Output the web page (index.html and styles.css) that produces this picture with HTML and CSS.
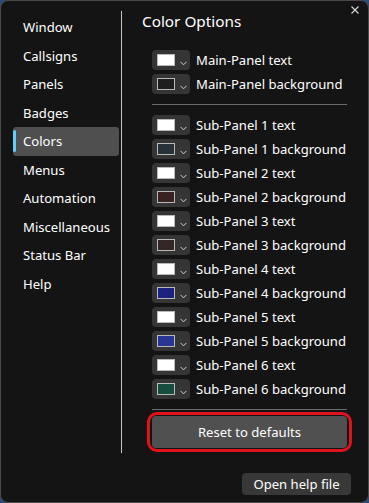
FILE: index.html
```html
<!DOCTYPE html>
<html>
<head>
<meta charset="utf-8">
<link rel="stylesheet" href="styles.css">
</head>
<body>
<div class="window">
  <svg class="close" width="8" height="8" viewBox="0 0 8 8"><path d="M0.5 0.5 L7.5 7.5 M7.5 0.5 L0.5 7.5" stroke="#d8d8d8" stroke-width="1.1" fill="none"/></svg>
  <nav class="sidebar">
    <div class="nav-item">Window</div>
    <div class="nav-item">Callsigns</div>
    <div class="nav-item">Panels</div>
    <div class="nav-item">Badges</div>
    <div class="nav-item active">Colors</div>
    <div class="nav-item">Menus</div>
    <div class="nav-item">Automation</div>
    <div class="nav-item">Miscellaneous</div>
    <div class="nav-item">Status Bar</div>
    <div class="nav-item">Help</div>
  </nav>
  <div class="vdivider"></div>
  <main class="content">
    <h1 class="title">Color Options</h1>
    <div class="rows first">
      <div class="row"><div class="picker"><span class="swatch" style="background:#ffffff"></span><svg class="chev" width="7" height="5" viewBox="0 0 7 5"><polyline points="0.5,0.8 3.5,3.8 6.5,0.8" fill="none" stroke="#cfcfcf" stroke-width="1"/></svg></div><span class="label">Main-Panel text</span></div>
      <div class="row"><div class="picker"><span class="swatch" style="background:#1e1e1e"></span><svg class="chev" width="7" height="5" viewBox="0 0 7 5"><polyline points="0.5,0.8 3.5,3.8 6.5,0.8" fill="none" stroke="#cfcfcf" stroke-width="1"/></svg></div><span class="label">Main-Panel background</span></div>
    </div>
    <div class="hdivider"></div>
    <div class="rows">
      <div class="row"><div class="picker"><span class="swatch" style="background:#ffffff"></span><svg class="chev" width="7" height="5" viewBox="0 0 7 5"><polyline points="0.5,0.8 3.5,3.8 6.5,0.8" fill="none" stroke="#cfcfcf" stroke-width="1"/></svg></div><span class="label">Sub-Panel 1 text</span></div>
      <div class="row"><div class="picker"><span class="swatch" style="background:#253238"></span><svg class="chev" width="7" height="5" viewBox="0 0 7 5"><polyline points="0.5,0.8 3.5,3.8 6.5,0.8" fill="none" stroke="#cfcfcf" stroke-width="1"/></svg></div><span class="label">Sub-Panel 1 background</span></div>
      <div class="row"><div class="picker"><span class="swatch" style="background:#ffffff"></span><svg class="chev" width="7" height="5" viewBox="0 0 7 5"><polyline points="0.5,0.8 3.5,3.8 6.5,0.8" fill="none" stroke="#cfcfcf" stroke-width="1"/></svg></div><span class="label">Sub-Panel 2 text</span></div>
      <div class="row"><div class="picker"><span class="swatch" style="background:#3b2222"></span><svg class="chev" width="7" height="5" viewBox="0 0 7 5"><polyline points="0.5,0.8 3.5,3.8 6.5,0.8" fill="none" stroke="#cfcfcf" stroke-width="1"/></svg></div><span class="label">Sub-Panel 2 background</span></div>
      <div class="row"><div class="picker"><span class="swatch" style="background:#ffffff"></span><svg class="chev" width="7" height="5" viewBox="0 0 7 5"><polyline points="0.5,0.8 3.5,3.8 6.5,0.8" fill="none" stroke="#cfcfcf" stroke-width="1"/></svg></div><span class="label">Sub-Panel 3 text</span></div>
      <div class="row"><div class="picker"><span class="swatch" style="background:#352626"></span><svg class="chev" width="7" height="5" viewBox="0 0 7 5"><polyline points="0.5,0.8 3.5,3.8 6.5,0.8" fill="none" stroke="#cfcfcf" stroke-width="1"/></svg></div><span class="label">Sub-Panel 3 background</span></div>
      <div class="row"><div class="picker"><span class="swatch" style="background:#ffffff"></span><svg class="chev" width="7" height="5" viewBox="0 0 7 5"><polyline points="0.5,0.8 3.5,3.8 6.5,0.8" fill="none" stroke="#cfcfcf" stroke-width="1"/></svg></div><span class="label">Sub-Panel 4 text</span></div>
      <div class="row"><div class="picker"><span class="swatch" style="background:#1a237e"></span><svg class="chev" width="7" height="5" viewBox="0 0 7 5"><polyline points="0.5,0.8 3.5,3.8 6.5,0.8" fill="none" stroke="#cfcfcf" stroke-width="1"/></svg></div><span class="label">Sub-Panel 4 background</span></div>
      <div class="row"><div class="picker"><span class="swatch" style="background:#ffffff"></span><svg class="chev" width="7" height="5" viewBox="0 0 7 5"><polyline points="0.5,0.8 3.5,3.8 6.5,0.8" fill="none" stroke="#cfcfcf" stroke-width="1"/></svg></div><span class="label">Sub-Panel 5 text</span></div>
      <div class="row"><div class="picker"><span class="swatch" style="background:#283593"></span><svg class="chev" width="7" height="5" viewBox="0 0 7 5"><polyline points="0.5,0.8 3.5,3.8 6.5,0.8" fill="none" stroke="#cfcfcf" stroke-width="1"/></svg></div><span class="label">Sub-Panel 5 background</span></div>
      <div class="row"><div class="picker"><span class="swatch" style="background:#ffffff"></span><svg class="chev" width="7" height="5" viewBox="0 0 7 5"><polyline points="0.5,0.8 3.5,3.8 6.5,0.8" fill="none" stroke="#cfcfcf" stroke-width="1"/></svg></div><span class="label">Sub-Panel 6 text</span></div>
      <div class="row"><div class="picker"><span class="swatch" style="background:#174d3e"></span><svg class="chev" width="7" height="5" viewBox="0 0 7 5"><polyline points="0.5,0.8 3.5,3.8 6.5,0.8" fill="none" stroke="#cfcfcf" stroke-width="1"/></svg></div><span class="label">Sub-Panel 6 background</span></div>
    </div>
    <div class="hdivider lower"></div>
    <div class="reset-wrap"><button class="reset">Reset to defaults</button></div>
    <div class="footer"><button class="help">Open help file</button></div>
  </main>
</div>
</body>
</html>
```

FILE: styles.css
```css
* { box-sizing: border-box; }
html, body { margin: 0; padding: 0; }
body {
  width: 369px;
  height: 503px;
  background: #2c4a7a;
  font-family: "Noto Sans", "Open Sans", sans-serif;
  color: #ffffff;
  overflow: hidden;
}
.window {
  position: relative;
  width: 369px;
  height: 503px;
  background: #141414;
  border: 1px solid #4a4a4a;
  border-radius: 8px;
  display: flex;
}
.close {
  position: absolute;
  top: 5px;
  right: 9px;
  display: block;
}
.sidebar {
  width: 120px;
  padding-top: 12px;
  display: flex;
  flex-direction: column;
  flex-shrink: 0;
}
.nav-item {
  position: relative;
  height: 28.5px;
  margin-left: 12px;
  width: 106px;
  padding-left: 10px;
  line-height: 28.5px;
  font-size: 13.1px;
  border-radius: 3px;
  white-space: nowrap;
}
.nav-item.active {
  background: #4f4f4f;
}
.nav-item.active::before {
  content: "";
  position: absolute;
  left: 0;
  top: 3px;
  width: 3px;
  height: 22px;
  border-radius: 2px;
  background: #60cdff;
}
.vdivider {
  width: 1px;
  margin-top: 10px;
  height: 442px;
  background: #c6c6c6;
  flex-shrink: 0;
}
.content {
  flex: 1;
  padding-left: 20px;
  display: flex;
  flex-direction: column;
}
.title {
  margin: 9px 0 0 0;
  font-size: 15.3px;
  font-weight: normal;
  line-height: 22px;
}
.rows {
  display: flex;
  flex-direction: column;
  gap: 4px;
  margin-left: 10px;
}
.rows.first { margin-top: 18px; }
.row {
  display: flex;
  align-items: center;
  height: 20px;
}
.picker {
  width: 38px;
  height: 20px;
  background: #353535;
  border-radius: 4px;
  display: flex;
  align-items: center;
  padding-left: 5px;
  flex-shrink: 0;
}
.swatch {
  width: 18px;
  height: 12px;
  border: 1px solid #b8b8b8;
  display: block;
}
.chev {
  margin-left: 5px;
  margin-top: 6px;
  display: block;
}
.label {
  margin-left: 6px;
  font-size: 13.1px;
  white-space: nowrap;
}
.hdivider {
  height: 1px;
  background: #6b6b6b;
  margin: 10px 0 10px 10px;
  width: 195px;
}
.hdivider.lower { margin: 10px 0 0 10px; }
.reset-wrap {
  margin-top: 2px;
  margin-left: 5px;
  width: 205px;
  height: 40px;
  border: 3px solid #e0121e;
  border-radius: 10px;
  padding: 1px 2px;
  display: flex;
}
.reset {
  flex: 1;
  background: #505050;
  border: none;
  border-radius: 4px;
  color: #ffffff;
  font-family: inherit;
  font-size: 13.1px;
  padding: 0;
}
.footer {
  margin-top: 21px;
  display: flex;
  justify-content: flex-end;
  padding-right: 17px;
}
.help {
  width: 109px;
  height: 22px;
  background: #383838;
  border: none;
  border-radius: 4px;
  color: #ffffff;
  font-family: inherit;
  font-size: 13.1px;
  padding: 0;
}
```
